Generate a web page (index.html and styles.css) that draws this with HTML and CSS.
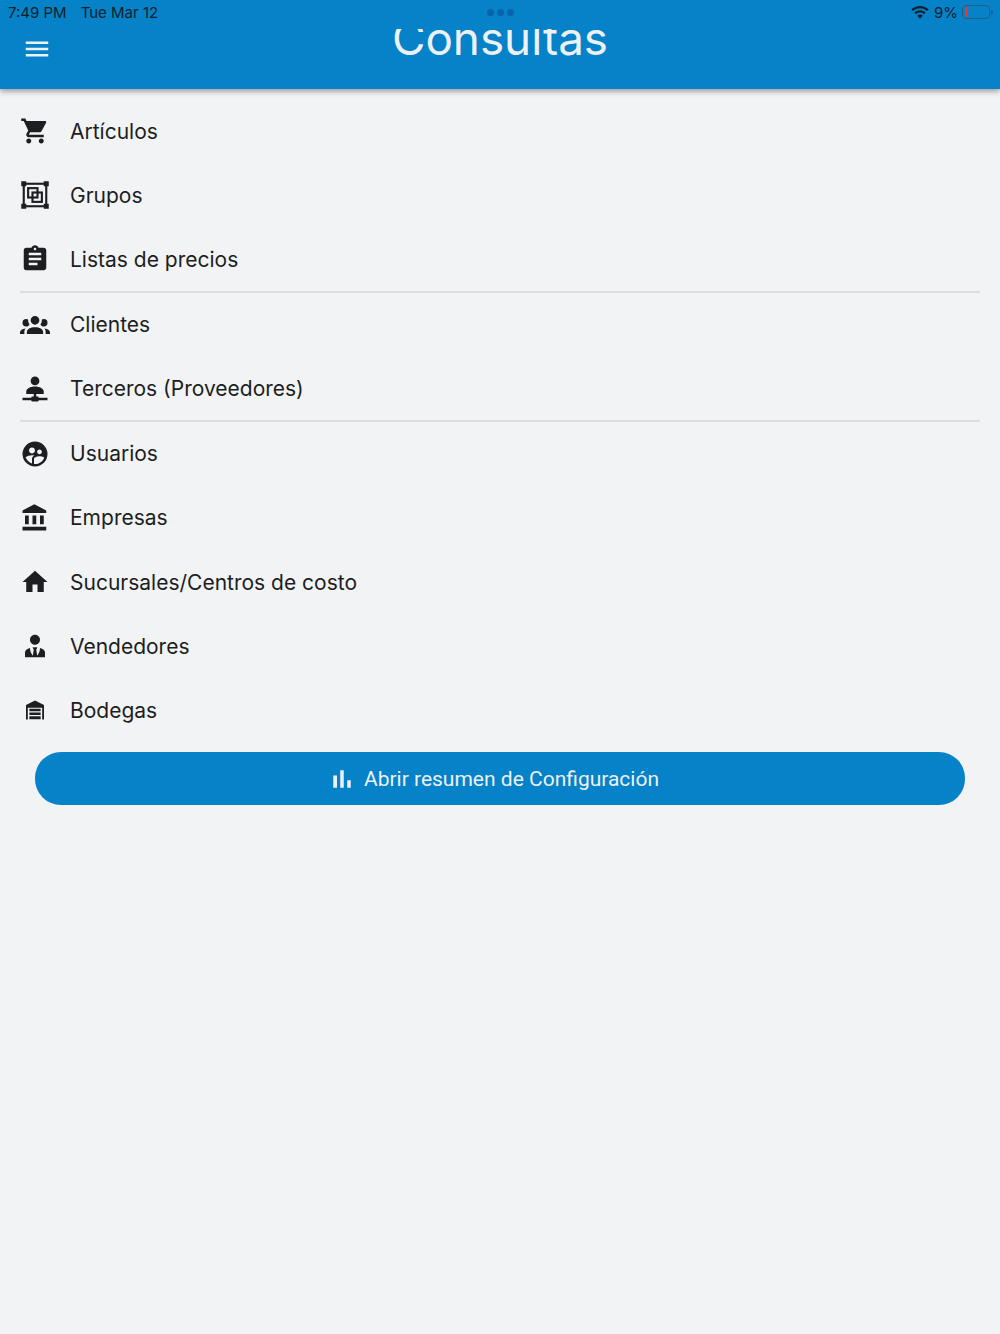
FILE: index.html
```html
<!DOCTYPE html>
<html lang="es">
<head>
    <meta charset="UTF-8">
    <meta name="viewport" content="width=device-width, initial-scale=1.0">
    <title>Consultas</title>
    <link rel="stylesheet" href="styles.css">
</head>
<body>
    <header class="header">
        <div class="status-bar">
            <div class="status-left"><span>7:49 PM</span><span>Tue Mar 12</span></div>
            <div class="status-dots"><i></i><i></i><i></i></div>
            <div class="status-right">
                <svg class="wifi" viewBox="0 0 18 13"><path d="M9 0C5.600 0 2.600 1.300.4 3.500l1.500 1.600C3.700 3.300 6.200 2.200 9 2.200s5.300 1.100 7.100 2.900l1.500-1.600C15.400 1.300 12.400 0 9 0z"/><path d="M9 4.300c-2.200 0-4.200.9-5.600 2.300l1.500 1.600C6 7.100 7.400 6.500 9 6.500s3 .6 4.100 1.700l1.500-1.600C13.200 5.200 11.200 4.300 9 4.300z"/><path d="M9 8.600c-1.100 0-2.100.4-2.800 1.200L9 12.800l2.800-3C11.100 9 10.100 8.600 9 8.600z"/></svg>
                <span>9%</span>
                <div class="battery"><div class="battery-level"></div></div>
                <div class="battery-tip"></div>
            </div>
        </div>
        <div class="toolbar">
            <svg class="menu-icon" viewBox="0 0 24 24"><path d="M3 18h18v-2H3v2zm0-5h18v-2H3v2zm0-7v2h18V6H3z"/></svg>
            <div class="title-clip"><h1>Consultas</h1></div>
        </div>
    </header>

    <main class="content">
        <ul class="menu-list">
            <li class="menu-item">
                <svg class="icon" viewBox="0 0 24 24"><path d="M7 18c-1.100 0-1.990.9-1.990 2S5.900 22 7 22s2-.9 2-2-.9-2-2-2zM1 2v2h2l3.600 7.590-1.350 2.450c-.16.28-.25.61-.25.96 0 1.100.9 2 2 2h12v-2H7.420c-.14 0-.25-.11-.25-.25l.03-.12.9-1.630h7.450c.75 0 1.410-.41 1.750-1.030l3.580-6.490c.08-.14.12-.31.12-.48 0-.55-.45-1-1-1H5.210l-.94-2H1zm16 16c-1.100 0-1.990.9-1.990 2s.89 2 1.990 2 2-.9 2-2-.9-2-2-2z"/></svg>
                <span>Artículos</span>
            </li>
            <li class="menu-item">
                <svg class="icon" viewBox="0 0 24 24">
                    <rect class="outline" x="3" y="3" width="18" height="18"/>
                    <rect x="1" y="1" width="4" height="4"/>
                    <rect x="19" y="1" width="4" height="4"/>
                    <rect x="1" y="19" width="4" height="4"/>
                    <rect x="19" y="19" width="4" height="4"/>
                    <rect class="outline" x="6.500" y="6.500" width="7.500" height="7.500"/>
                    <rect class="outline" x="10" y="10" width="7.500" height="7.500"/>
                </svg>
                <span>Grupos</span>
            </li>
            <li class="menu-item">
                <svg class="icon" viewBox="0 0 24 24"><path d="M19 3h-4.180C14.400 1.840 13.300 1 12 1c-1.300 0-2.400.84-2.820 2H5c-1.100 0-2 .9-2 2v14c0 1.100.9 2 2 2h14c1.100 0 2-.9 2-2V5c0-1.100-.9-2-2-2zm-7 0c.55 0 1 .45 1 1s-.45 1-1 1-1-.45-1-1 .45-1 1-1zm2 14H7v-2h7v2zm3-4H7v-2h10v2zm0-4H7V7h10v2z"/></svg>
                <span>Listas de precios</span>
            </li>
            <li class="divider"></li>
            <li class="menu-item">
                <svg class="icon" viewBox="0 0 24 24"><path d="M12 5.500a3.500 3.500 0 1 1 0 7 3.500 3.500 0 0 1 0-7zM5 8c.56 0 1.080.15 1.530.42-.15 1.430.27 2.850 1.130 3.960C7.160 13.340 6.160 14 5 14a3 3 0 0 1 0-6zm14 0a3 3 0 0 1 0 6c-1.160 0-2.160-.66-2.660-1.620.86-1.110 1.280-2.530 1.130-3.960.45-.27.97-.42 1.530-.42zM5.500 18.250c0-2.070 2.910-3.750 6.500-3.750s6.500 1.680 6.500 3.750V20h-13v-1.750zM0 20v-1.500c0-1.390 1.890-2.560 4.450-2.900-.59.68-.95 1.620-.95 2.650V20H0zm24 0h-3.500v-1.750c0-1.030-.36-1.970-.95-2.650 2.560.34 4.450 1.510 4.450 2.900V20z"/></svg>
                <span>Clientes</span>
            </li>
            <li class="menu-item">
                <svg class="icon" viewBox="0 0 24 24"><path d="M13 16v2h1a1 1 0 0 1 1 1h7v2h-7a1 1 0 0 1-1 1h-4a1 1 0 0 1-1-1H2v-2h7a1 1 0 0 1 1-1h1v-2H5v-2c0-2.210 3.130-4 7-4s7 1.790 7 4v2h-6z"/><circle cx="12" cy="5.500" r="3.500"/></svg>
                <span>Terceros (Proveedores)</span>
            </li>
            <li class="divider"></li>
            <li class="menu-item">
                <svg class="icon" viewBox="0 0 24 24"><path d="M12 2a10 10 0 1 0 0 20 10 10 0 0 0 0-20zm3.600 6.340c1.070 0 1.930.86 1.930 1.930s-.86 1.930-1.930 1.930a1.930 1.930 0 0 1-1.930-1.930c-.01-1.070.86-1.930 1.930-1.930zm-6-1.580c1.300 0 2.360 1.060 2.360 2.360S10.900 11.500 9.600 11.500s-2.360-1.080-2.360-2.380c0-1.310 1.050-2.360 2.360-2.360zm0 9.130v3.750c-2.400-.75-4.300-2.600-5.140-4.960C5.500 13.560 8.130 13 9.600 13c.53 0 1.200.07 1.900.21-1.640.87-1.900 2.020-1.900 2.680zM12 20c-.28 0-.54 0-.8-.04v-4.070c0-1.420 2.940-2.130 4.400-2.130 1.070 0 2.900.39 3.840 1.150C18.270 17.880 15.380 20 12 20z"/></svg>
                <span>Usuarios</span>
            </li>
            <li class="menu-item">
                <svg class="icon" viewBox="0 0 24 24"><path d="M4 10v7h3v-7H4zm6 0v7h3v-7h-3zM2 22h19v-3H2v3zm14-12v7h3v-7h-3zm-4.500-9L2 6v2h19V6l-9.500-5z"/></svg>
                <span>Empresas</span>
            </li>
            <li class="menu-item">
                <svg class="icon" viewBox="0 0 24 24"><path d="M10 20v-6h4v6h5v-8h3L12 3 2 12h3v8z"/></svg>
                <span>Sucursales/Centros de costo</span>
            </li>
            <li class="menu-item">
                <svg class="icon" viewBox="0 0 24 24"><path d="M12 3c2.210 0 4 1.790 4 4s-1.790 4-4 4-4-1.790-4-4 1.790-4 4-4zm4 10.540c0 1.060-.28 3.530-2.190 6.290L13 15l.94-1.880c-.62-.07-1.270-.12-1.940-.12s-1.320.05-1.940.12L11 15l-.81 4.830C8.280 17.070 8 14.600 8 13.540 5.610 14.240 4 15.500 4 17v4h16v-4c0-1.500-1.600-2.760-4-3.460z"/></svg>
                <span>Vendedores</span>
            </li>
            <li class="menu-item">
                <svg class="icon" viewBox="-1.350 -0.850 26.700 26.700"><path d="M20 8v13h-1.600V10.400H5.600V21H4V8l8-4 8 4zm-3 3.400H7v2.300h10v-2.300zm0 3.300H7V17h10v-2.300zm0 3.300H7v2.700h10V18z"/></svg>
                <span>Bodegas</span>
            </li>
        </ul>

        <button class="summary-btn" type="button">
            <svg class="btn-icon" viewBox="0 0 24 24"><path d="M5 9.200h3V19H5zM10.600 5h2.800v14h-2.800zm5.600 8H19v6h-2.800z"/></svg>
            <span>Abrir resumen de Configuración</span>
        </button>
    </main>
</body>
</html>
```

FILE: styles.css
```css
* {
    margin: 0;
    padding: 0;
    box-sizing: border-box;
}

body {
    min-height: 100vh;
    background: #f2f3f5;
    font-family: Inter, "Liberation Sans", sans-serif;
    color: #1c1e21;
    overflow: hidden;
}

.header {
    height: 89px;
    background: #0582c8;
    box-shadow: 0 2px 6px rgba(0, 0, 0, 0.4);
}

.status-bar {
    height: 24px;
    display: grid;
    grid-template-columns: 1fr auto 1fr;
    align-items: center;
    font-size: 15px;
    color: #0d1f2d;
}

.status-left {
    display: flex;
    gap: 14px;
    padding-left: 8px;
}

.status-dots {
    display: flex;
    gap: 3px;
}

.status-dots i {
    width: 7px;
    height: 7px;
    border-radius: 50%;
    background: #0a62aa;
}

.status-right {
    display: flex;
    align-items: center;
    justify-content: flex-end;
    padding-right: 7px;
}

.wifi {
    width: 18px;
    height: 13px;
    margin-right: 5px;
    fill: #0d1f2d;
}

.battery {
    width: 28px;
    height: 14px;
    margin-left: 4px;
    padding: 1px 2px;
    border: 1px solid #1f5d8a;
    border-radius: 4px;
}

.battery-level {
    width: 3px;
    height: 100%;
    background: #f5302a;
}

.battery-tip {
    width: 2px;
    height: 5px;
    margin-left: 1px;
    border-radius: 0 2px 2px 0;
    background: #1f5d8a;
}

.toolbar {
    height: 65px;
    display: grid;
    grid-template-columns: 1fr auto 1fr;
}

.menu-icon {
    width: 30px;
    height: 30px;
    margin: 10px 0 0 22px;
    fill: #eef1f4;
}

.title-clip {
    height: 40px;
    margin-top: 5px;
    overflow: hidden;
}

.title-clip h1 {
    margin-top: -18px;
    font-size: 45.8px;
    font-weight: 400;
    line-height: 56px;
    color: #eef1f4;
}

.content {
    padding-top: 10px;
}

.menu-list {
    list-style: none;
    padding: 0 20px;
}

.menu-item {
    height: 64.15px;
    display: flex;
    align-items: center;
    gap: 20px;
    font-size: 21px;
}

.icon {
    width: 30px;
    height: 30px;
    flex-shrink: 0;
    fill: #1c1e21;
}

.icon .outline {
    fill: none;
    stroke: #1c1e21;
    stroke-width: 1.7;
}

.divider {
    height: 2px;
    margin: -0.5px 0;
    background: #dcdee0;
}

.summary-btn {
    width: 930px;
    height: 53px;
    margin: 10px 35px 0;
    padding-right: 14px;
    display: flex;
    align-items: center;
    justify-content: center;
    gap: 7px;
    border: none;
    border-radius: 26px;
    background: #0582c8;
    color: #eef1f4;
    font-family: Roboto, sans-serif;
    font-size: 21px;
    font-weight: 400;
}

.btn-icon {
    width: 30px;
    height: 30px;
    fill: #eef1f4;
}
```
